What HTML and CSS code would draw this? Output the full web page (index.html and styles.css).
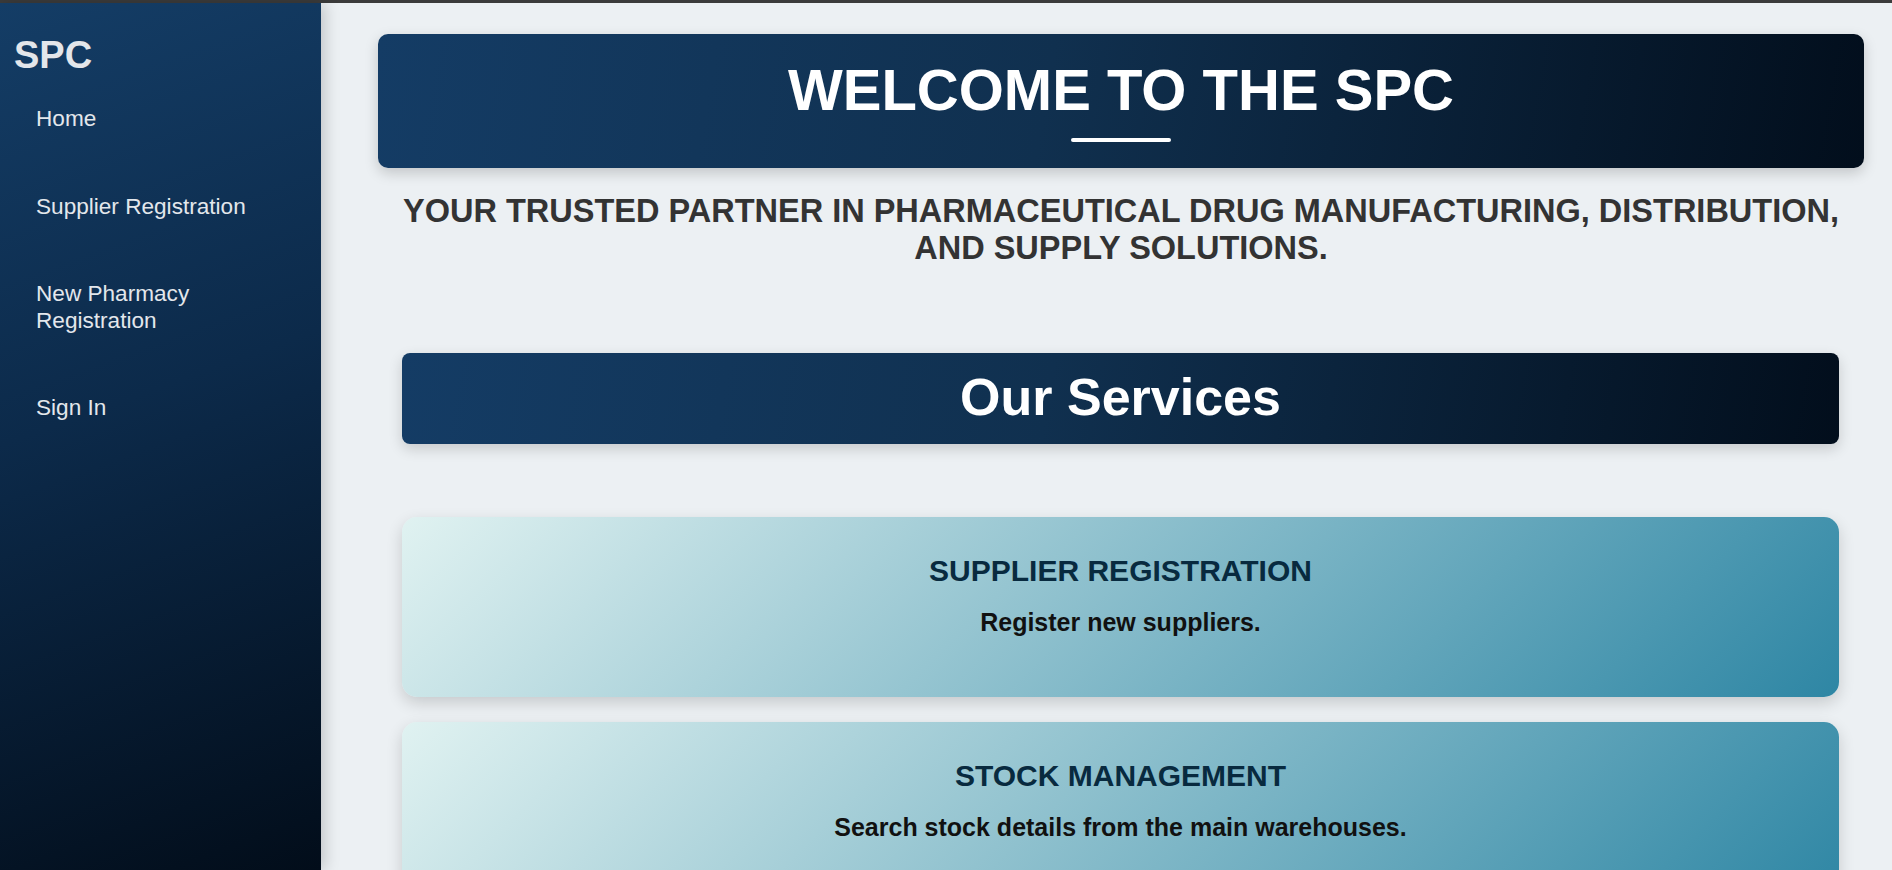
FILE: index.html
```html
<!DOCTYPE html>
<html lang="en">
<head>
<meta charset="utf-8">
<title>SPC</title>
<link rel="stylesheet" href="styles.css">
</head>
<body>
<div class="topbar"></div>
<div class="layout">
  <aside class="sidebar">
    <h2 class="brand">SPC</h2>
    <nav class="nav">
      <a href="#" class="nav-link">Home</a>
      <a href="#" class="nav-link">Supplier Registration</a>
      <a href="#" class="nav-link">New Pharmacy Registration</a>
      <a href="#" class="nav-link">Sign In</a>
    </nav>
  </aside>
  <main class="main">
    <header class="hero">
      <h1 class="hero-title">WELCOME TO THE SPC</h1>
      <span class="hero-line"></span>
    </header>
    <p class="tagline">YOUR TRUSTED PARTNER IN PHARMACEUTICAL DRUG MANUFACTURING, DISTRIBUTION, AND SUPPLY SOLUTIONS.</p>
    <section class="services">
      <h2 class="services-title">Our Services</h2>
      <div class="cards">
        <div class="card">
          <h3 class="card-title">SUPPLIER REGISTRATION</h3>
          <p class="card-text">Register new suppliers.</p>
        </div>
        <div class="card">
          <h3 class="card-title">STOCK MANAGEMENT</h3>
          <p class="card-text">Search stock details from the main warehouses.</p>
        </div>
      </div>
    </section>
  </main>
</div>
</body>
</html>
```
FILE: styles.css
```css
* { box-sizing: border-box; }

html, body {
  margin: 0;
  padding: 0;
  height: 100%;
  overflow: hidden;
}

body {
  font-family: "Liberation Sans", Arial, sans-serif;
  background: #ecf0f3;
  color: #333;
}

.topbar {
  height: 3px;
  background: #3b3b3b;
}

.layout {
  display: flex;
  height: calc(100vh - 3px);
}

.sidebar {
  flex: 0 0 321px;
  width: 321px;
  height: 100%;
  padding: 31px 14px 0 14px;
  background: linear-gradient(160deg, #143d66 0%, #0c2a4a 45%, #020d1a 100%);
  box-shadow: 4px 0 14px rgba(0, 0, 0, 0.18);
  position: relative;
  z-index: 2;
  display: flex;
  flex-direction: column;
  gap: 28.5px;
}

.brand {
  margin: 0;
  font-size: 38px;
  font-weight: bold;
  line-height: 43.5px;
  color: #e3e6ea;
}

.nav {
  display: flex;
  flex-direction: column;
  gap: 61px;
}

.nav-link {
  display: block;
  padding: 0 20px 0 22px;
  font-size: 22.6px;
  line-height: 26.6px;
  color: #e3e7ec;
  text-decoration: none;
}

.main {
  flex: 1;
  min-width: 0;
  padding: 31px 0 0 29px;
  overflow: hidden;
}

.hero {
  margin: 0 28px;
  padding: 23px 0 26px;
  border-radius: 10px;
  background: linear-gradient(100deg, #143c65 0%, #10304f 45%, #020e1c 100%);
  box-shadow: 0 5px 14px rgba(0, 0, 0, 0.18);
  text-align: center;
  display: flex;
  flex-direction: column;
  align-items: center;
}

.hero-title {
  margin: 0;
  font-size: 58px;
  font-weight: bold;
  line-height: 66.7px;
  color: #ffffff;
}

.hero-line {
  display: block;
  width: 100px;
  height: 4px;
  margin-top: 14px;
  border-radius: 2px;
  background: #ffffff;
}

.tagline {
  margin: 25px 0 0;
  padding: 0 36px;
  font-size: 32.5px;
  font-weight: bold;
  line-height: 37.6px;
  text-align: center;
  color: #333333;
}

.services {
  margin-top: 85px;
  padding: 0 53px 0 52px;
}

.services-title {
  margin: 0;
  padding: 15px 0 16px;
  border-radius: 8px;
  background: linear-gradient(100deg, #143c65 0%, #10304f 45%, #020e1c 100%);
  box-shadow: 0 5px 14px rgba(0, 0, 0, 0.16);
  font-size: 52px;
  font-weight: bold;
  line-height: 59.7px;
  text-align: center;
  color: #ffffff;
}

.cards {
  margin-top: 73px;
  display: flex;
  flex-direction: column;
  gap: 25px;
}

.card {
  padding: 37px 20px 61px;
  border-radius: 15px;
  background: linear-gradient(135deg, #e0f2f1 0%, #2e86a4 100%);
  box-shadow: 0 6px 16px rgba(0, 0, 0, 0.16);
  text-align: center;
}

.card-title {
  margin: 0 0 20px;
  font-size: 30px;
  font-weight: bold;
  line-height: 33.9px;
  color: #082a3f;
}

.card-text {
  margin: 0;
  font-size: 25px;
  font-weight: bold;
  line-height: 28.7px;
  color: #111111;
}
```
